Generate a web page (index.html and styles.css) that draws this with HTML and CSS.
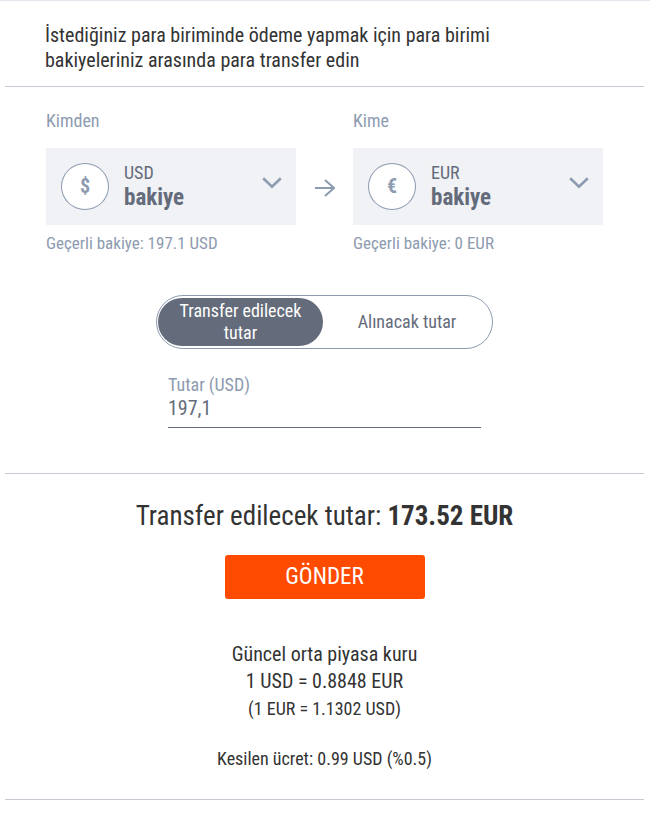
FILE: index.html
```html
<!DOCTYPE html>
<html lang="tr">
<head>
<meta charset="utf-8">
<meta name="viewport" content="width=device-width, initial-scale=1">
<title>Para transferi</title>
<link rel="stylesheet" href="styles.css">
</head>
<body>
<form class="transfer">
  <header class="intro">
    <p>İstediğiniz para biriminde ödeme yapmak için para birimi bakiyeleriniz arasında para transfer edin</p>
  </header>

  <section class="setup">
    <div class="accounts">
      <div class="account">
        <label class="caption" for="from">Kimden</label>
        <div class="picker">
          <select class="picker-select" id="from"><option>USD</option></select>
          <span class="coin">$</span>
          <span class="picker-kind">bakiye</span>
          <svg class="chevron" viewBox="0 0 20 12" aria-hidden="true"><path d="M1.2 1.2 10 9.8 18.8 1.2"/></svg>
        </div>
        <p class="available">Geçerli bakiye: 197.1 USD</p>
      </div>
      <svg class="arrow" viewBox="0 0 20 18" aria-hidden="true"><path d="M0 9H19M10 1 19 9 10 17"/></svg>
      <div class="account">
        <label class="caption" for="to">Kime</label>
        <div class="picker">
          <select class="picker-select" id="to"><option>EUR</option></select>
          <span class="coin">€</span>
          <span class="picker-kind">bakiye</span>
          <svg class="chevron" viewBox="0 0 20 12" aria-hidden="true"><path d="M1.2 1.2 10 9.8 18.8 1.2"/></svg>
        </div>
        <p class="available">Geçerli bakiye: 0 EUR</p>
      </div>
    </div>

    <div class="toggle">
      <label class="choice"><input type="radio" name="mode" checked><span>Transfer edilecek tutar</span></label>
      <label class="choice"><input type="radio" name="mode"><span>Alınacak tutar</span></label>
    </div>

    <div class="field">
      <label class="field-label" for="amount">Tutar (USD)</label>
      <input class="field-input" id="amount" type="text" inputmode="decimal" value="197,1">
    </div>
  </section>

  <section class="summary">
    <p class="total">Transfer edilecek tutar: <strong>173.52 EUR</strong></p>
    <button class="send" type="submit">GÖNDER</button>
    <p class="rate">Güncel orta piyasa kuru<br>1 USD = 0.8848 EUR</p>
    <p class="detail">(1 EUR = 1.1302 USD)</p>
    <p class="detail fee">Kesilen ücret: 0.99 USD (%0.5)</p>
  </section>
</form>
</body>
</html>
```
FILE: styles.css
```css
* {
  box-sizing: border-box;
}

body {
  margin: 0;
  border-top: 1px solid #e6e6ee;
  background: #fff;
  color: #333;
  font-family: "Roboto Condensed", "Liberation Sans Narrow", sans-serif;
  font-size: 18px;
}

p {
  margin: 0;
}

.transfer {
  margin: 0 6px 0 5px;
}

.intro {
  padding: 22px 120px 13px 40px;
  border-bottom: 1px solid #c5cbd3;
  font-size: 20px;
  line-height: 25px;
}

.setup {
  padding: 22px 41px 45px;
  border-bottom: 1px solid #c9c9d3;
}

.accounts {
  display: grid;
  grid-template-columns: 1fr 57px 1fr;
  align-items: center;
}

.caption,
.field-label {
  display: block;
  color: #8d9bb0;
  line-height: 24px;
}

.picker {
  display: grid;
  grid-template-columns: 48px 1fr 20px;
  column-gap: 15px;
  height: 77px;
  margin-top: 15px;
  padding: 0 14px 0 15px;
  align-items: center;
  position: relative;
  background: #f0f2f6;
  color: #646b7a;
}

.picker-select {
  position: absolute;
  inset: 0;
  width: 100%;
  padding: 0 14px 28px 78px;
  appearance: none;
  border: 0;
  background: transparent;
  color: inherit;
  font: inherit;
}

.coin,
.picker-kind,
.chevron {
  position: relative;
  pointer-events: none;
}

.coin {
  display: grid;
  place-items: center;
  height: 47px;
  padding-bottom: 2px;
  border: 1px solid #8d9bb0;
  border-radius: 50%;
  background: #fff;
  color: #8d9bb0;
  font-size: 20px;
  font-weight: 700;
}

.picker-kind {
  padding-top: 22px;
  font-size: 23px;
  line-height: 28px;
  font-weight: 700;
}

.chevron {
  width: 20px;
  margin-bottom: 8px;
  fill: none;
  stroke: #8d9bb0;
  stroke-width: 2.6;
}

.arrow {
  width: 20px;
  margin: 12px auto 0;
  fill: none;
  stroke: #8d9bb0;
  stroke-width: 2;
}

.available {
  margin-top: 6px;
  color: #8d9bb0;
  font-size: 17px;
  line-height: 24px;
}

.toggle {
  display: grid;
  grid-template-columns: 165fr 168fr;
  max-width: 337px;
  height: 54px;
  margin: 40px auto 0;
  padding: 2px 1px;
  border: 1px solid #8d9bb0;
  border-radius: 27px;
}

.choice {
  display: grid;
  position: relative;
  color: #646b7a;
  line-height: 22px;
  text-align: center;
}

.choice input {
  position: absolute;
  inset: 0;
  margin: 0;
  opacity: 0;
}

.choice span {
  display: grid;
  place-items: center;
  padding: 0 16px;
  border-radius: 25px;
}

.choice input:checked + span {
  background: #646b7a;
  color: #fff;
}

.field {
  max-width: 313px;
  margin: 24px auto 0;
}

.field-input {
  display: block;
  width: 100%;
  height: 31px;
  padding: 0 0 8px;
  border: 0;
  border-bottom: 1px solid #646b7a;
  background: transparent;
  color: #646b7a;
  font: inherit;
  font-size: 20px;
}

.summary {
  padding: 24px 0 26px;
  border-bottom: 1px solid #c9c9d3;
  text-align: center;
}

.total {
  font-size: 27px;
  line-height: 36px;
}

.send {
  width: 200px;
  height: 44px;
  margin: 21px 0 42px;
  padding: 0 0 2px;
  border: 0;
  border-radius: 3px;
  background: #ff4b00;
  color: #fff;
  font: inherit;
  font-size: 23px;
}

.rate {
  font-size: 20px;
  line-height: 27px;
}

.detail {
  line-height: 28px;
}

.fee {
  margin-top: 22px;
}
```
